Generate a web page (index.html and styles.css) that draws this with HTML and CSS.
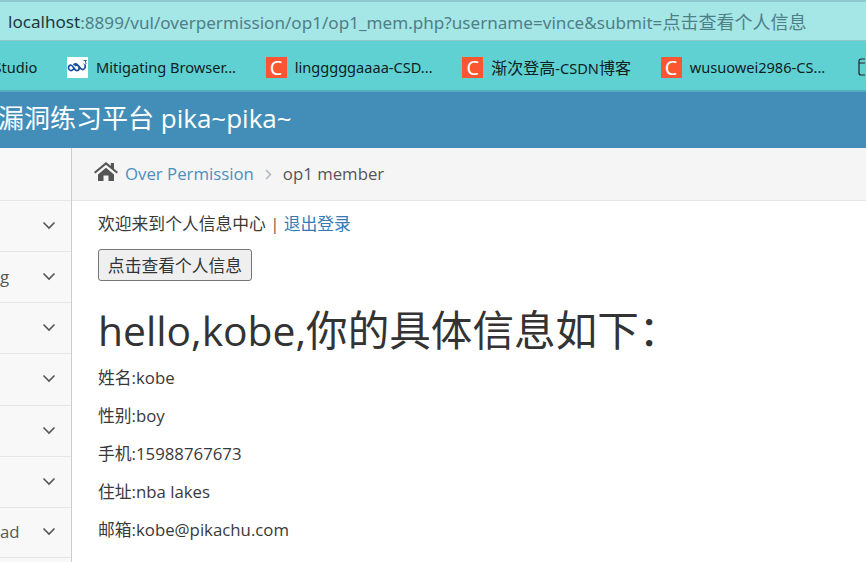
FILE: index.html
```html
<!DOCTYPE html>
<html lang="zh">
<head>
<meta charset="utf-8">
<title>op1 member</title>
<link rel="stylesheet" href="styles.css">
</head>
<body>
<div class="addressbar"><span class="host">localhost</span><span class="rest">:8899/vul/overpermission/op1/op1_mem.php?username=vince&amp;submit=<span class="url-cjk">点击查看个人信息</span></span></div>
<div class="bookmarks">
  <span class="bm bm-studio">Studio</span>
  <span class="bm"><svg class="fav" viewBox="0 0 21 21"><rect width="21" height="21" fill="#fff"/><path d="M2 9c1.500-1.500 3-1 4.500 1.500s3 4 5 2.500c1.500-1.200 1-2.500-.5-4.500-1.500-2-3-2-4.500-.5M8 9c1.500-1.500 3-1 4.500 1s3 3.500 4.500 2c1.500-1.500 1.500-3 1-4M2 9c-1 1.500-.5 4 1.500 4.500 1.500.3 2.500-.5 3.500-2" fill="none" stroke="#1a4f9c" stroke-width="1.700"/><path d="M16.500 3.500h3l-1.500 1.500c1.500.2 1.500 2.500-.2 2.500-.6 0-1-.2-1.300-.6" fill="none" stroke="#1a4f9c" stroke-width=".9"/></svg>Mitigating Browser...</span>
  <span class="bm"><span class="csdn">C</span>lingggggaaaa-CSD...</span>
  <span class="bm"><span class="csdn">C</span><span><span class="bm-cjk">渐次登高</span>-CSDN<span class="bm-cjk">博客</span></span></span>
  <span class="bm"><span class="csdn">C</span>wusuowei2986-CS...</span>
  <span class="bm bm-folder"><svg class="folder" viewBox="0 0 7 18"><path d="M7 1H3a2 2 0 0 0-2 2v12a2 2 0 0 0 2 2h4M1 5h6" fill="none" stroke="#222" stroke-width="1.200"/></svg></span>
</div>
<header class="topbar">漏洞练习平台 pika~pika~</header>
<div class="main">
  <aside class="sidebar">
    <div class="navitem"><span></span><svg class="chev" viewBox="0 0 14 9"><path d="M1.500 1.500 7 7l5.500-5.500" /></svg></div>
    <div class="navitem"><span>g</span><svg class="chev" viewBox="0 0 14 9"><path d="M1.500 1.500 7 7l5.500-5.500" /></svg></div>
    <div class="navitem"><span></span><svg class="chev" viewBox="0 0 14 9"><path d="M1.500 1.500 7 7l5.500-5.500" /></svg></div>
    <div class="navitem"><span></span><svg class="chev" viewBox="0 0 14 9"><path d="M1.500 1.500 7 7l5.500-5.500" /></svg></div>
    <div class="navitem"><span></span><svg class="chev" viewBox="0 0 14 9"><path d="M1.500 1.500 7 7l5.500-5.500" /></svg></div>
    <div class="navitem"><span></span><svg class="chev" viewBox="0 0 14 9"><path d="M1.500 1.500 7 7l5.500-5.500" /></svg></div>
    <div class="navitem"><span>ad</span><svg class="chev" viewBox="0 0 14 9"><path d="M1.500 1.500 7 7l5.500-5.500" /></svg></div>
  </aside>
  <main class="content">
    <nav class="crumbs">
      <svg class="home" viewBox="0 0 24 20"><path fill="#555" d="M12 1 0 11l1.300 1.500L12 3.700l10.700 8.800L24 11l-4-3.300V2h-3.200v3.100zM4 13.500V20h5.500v-5.500h5V20H20v-6.500L12 6.800z"/></svg>
      <a class="crumb-link">Over Permission</a>
      <svg class="sep" viewBox="0 0 7 11"><path d="M1 1l4.500 4.500L1 10"/></svg>
      <span class="crumb-cur">op1 member</span>
    </nav>
    <div class="body">
      <p class="welcome">欢迎来到个人信息中心 <span class="pipe">|</span> <a class="logout">退出登录</a></p>
      <button class="btn">点击查看个人信息</button>
      <h1 class="title">hello,kobe,<span class="title-cjk">你的具体信息如下：</span></h1>
      <p class="info">姓名:kobe</p>
      <p class="info">性别:boy</p>
      <p class="info">手机:15988767673</p>
      <p class="info">住址:nba lakes</p>
      <p class="info">邮箱:kobe@pikachu.com</p>
    </div>
  </main>
</div>
</body>
</html>
```
FILE: styles.css
```css
* { box-sizing: border-box; }
html, body { margin: 0; height: 100%; overflow: hidden; }
body {
  width: 866px;
  height: 562px;
  background: #fff;
  font-family: "Open Sans", "Noto Sans CJK SC", sans-serif;
  color: #393939;
  display: flex;
  flex-direction: column;
}
.addressbar {
  height: 41px;
  flex: none;
  background: #a5e6e6;
  border-top: 2px solid #8fc9cf;
  border-bottom: 1px solid #8fc4c8;
  padding: 0 0 0 8px;
  display: flex;
  align-items: center;
  font-size: 17.100px;
  white-space: nowrap;
  font-family: "Noto Sans", "Noto Sans CJK SC", sans-serif;
}
.host { color: #1d3a3c; }
.rest { color: #4f7f86; }
.url-cjk { font-size: 18px; }
.bookmarks {
  height: 51px;
  flex: none;
  background: #5fd1d2;
  border-bottom: 2px solid #55aebd;
  padding-top: 2px;
  display: flex;
  align-items: center;
  gap: 29.700px;
  white-space: nowrap;
  font-size: 14.600px;
  color: #10201f;
  font-family: "Noto Sans", "Noto Sans CJK SC", sans-serif;
}
.bm { display: flex; align-items: center; gap: 8px; flex: none; }
.bm-studio { margin-left: -6.500px; }
.bm-cjk { font-size: 16px; }
.bm-folder { margin-left: 3.500px; }
.fav { width: 21px; height: 21px; margin-top: 1px; }
.csdn {
  width: 21px;
  height: 21px;
  margin-top: 1px;
  background: #fc5531;
  color: #fff;
  font: 20px/21px "Noto Sans", sans-serif;
  text-align: center;
}
.folder { width: 7px; height: 18px; }
.topbar {
  height: 56px;
  flex: none;
  background: #438eb9;
  color: #fff;
  font-size: 26px;
  line-height: 52px;
  white-space: nowrap;
  text-indent: -2px;
  overflow: hidden;
}
.main { flex: 1; display: flex; min-height: 0; }
.sidebar {
  width: 72px;
  flex: none;
  background: #f8f8f8;
  border-right: 1px solid #ccc;
  padding-top: 52px;
}
.navitem {
  height: 51.150px;
  border-top: 1px solid #e5e5e5;
  padding-bottom: 1px;
  display: flex;
  align-items: center;
  justify-content: space-between;
  padding-right: 15px;
  font-size: 16.800px;
  color: #585858;
  overflow: hidden;
}
.navitem:last-child { border-bottom: 1px solid #e5e5e5; }
.chev { width: 14px; height: 9px; fill: none; stroke: #555; stroke-width: 1.600; }
.content { flex: 1; min-width: 0; }
.crumbs {
  height: 53px;
  background: #f5f5f5;
  border-bottom: 1px solid #e5e5e5;
  padding: 0 0 2px 22px;
  display: flex;
  align-items: center;
  font-size: 16.800px;
}
.home { width: 24px; height: 20px; margin-right: 7px; margin-top: -4px; }
.crumb-link { color: #4c8fbd; }
.sep { width: 7px; height: 11px; margin: 2px 11px 0 11px; fill: none; stroke: #b2b6bf; stroke-width: 1.500; }
.crumb-cur { color: #555; }
.body { padding: 11px 26px 0; }
.welcome { margin: 0; font-size: 16.800px; line-height: 24px; }
.pipe { color: #7a5a44; }
.logout { color: #337ab7; }
.btn {
  display: block;
  margin-top: 13px;
  width: 154px;
  height: 32px;
  padding: 0;
  background: #efefef;
  border: 1px solid #767676;
  border-radius: 3px;
  font: 16.800px "Noto Sans CJK SC", sans-serif;
  color: #333;
}
.title {
  margin: 21px 0 0;
  font-size: 40.800px;
  line-height: 56px;
  font-weight: 400;
  color: #333;
  white-space: nowrap;
}
.title-cjk { font-size: 41.600px; }
.info { margin: 0 0 14px; font-size: 16.800px; line-height: 24px; }
.title + .info { margin-top: 8px; }
```
